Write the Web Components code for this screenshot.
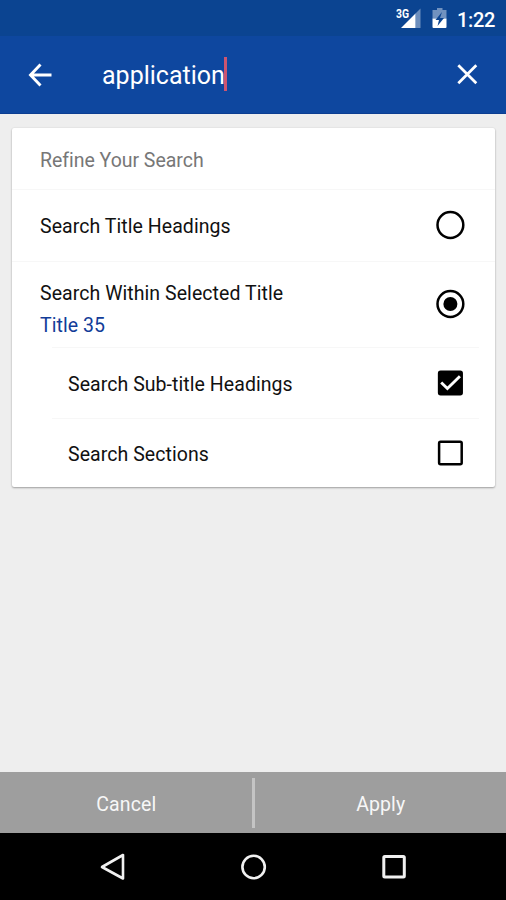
<!DOCTYPE html>
<html lang="en">
<head>
<meta charset="utf-8">
<title>Search</title>
<style>
html,body{margin:0;height:100%}
body{font-family:Roboto,"Liberation Sans",sans-serif;background:#eee;overflow:hidden}
</style>
</head>
<body>
<search-screen></search-screen>
<script>
const define = (name, html) => customElements.define(name, class extends HTMLElement {
  constructor() {
    super();
    this.attachShadow({mode: 'open'}).innerHTML = '<style>:host{box-sizing:border-box}svg{display:block;flex:none}</style>' + html;
  }
});

define('status-bar', `
<style>
:host{display:flex;height:36px;background:#0b4491;color:#fff;align-items:center;justify-content:flex-end;padding-right:11px}
.time{font-size:20px;line-height:24px;font-weight:500;width:38px;margin-left:10px;padding-top:3px;white-space:nowrap;letter-spacing:-.3px}
</style>
<svg width="26" height="36" viewBox="0 0 26 36"><path d="M6 28 20.500 13.500V28Z" fill="#fff"/><path d="M20.500 13.500 25.500 8.500V28H20.500Z" fill="#fff" opacity=".4"/><text x="1" y="17.500" font-size="12" font-weight="700" fill="#fff" textLength="13" lengthAdjust="spacingAndGlyphs">3G</text></svg>
<svg width="15" height="36" viewBox="0 0 15 36" style="margin-left:11px"><path d="M1 10H5V8H10.500V10H14.500V18.500H.5V10Z" fill="#fff" opacity=".42"/><path d="M.5 18.500H14.500V27Q14.500 28 13.500 28H1.500Q.5 28 .5 27Z" fill="#fff"/><path d="M10 12 3.500 20H7L5.500 26 12 18H8Z" fill="#0b4491"/></svg>
<span class="time">1:22</span>`);

define('search-bar', `
<style>
:host{display:flex;height:78px;background:#0e479f;color:#fff;align-items:center;padding:0 27px 0 28px;border-bottom:1px solid #0b3d91}
.q{margin-left:50px;width:122px;font-size:25px;line-height:34px;white-space:nowrap;padding-top:2px}
.cursor{width:3px;height:34px;background:#cc5570;margin-top:-2px}
.close{margin-left:auto}
</style>
<svg width="24" height="24" viewBox="0 0 24 24" fill="none" stroke="#fff" stroke-width="2.900"><path d="M23.500 12H3M12.500 1.500 2.500 12 12.500 22.500"/></svg>
<span class="q">application</span><span class="cursor"></span>
<svg class="close" width="24" height="24" viewBox="0 0 24 24" fill="none" stroke="#fff" stroke-width="2.700"><path d="M3.300 2.300 21.300 20.300M21.300 2.300 3.300 20.300"/></svg>`);

define('refine-card', `
<style>
:host{display:block;margin:14px 11px 0 12px;height:359px;background:#fff;border-radius:2px;box-shadow:0 1px 2px rgba(0,0,0,.32),0 0 2px rgba(0,0,0,.08)}
h2{margin:0;height:61px;box-sizing:border-box;padding:2px 0 0 28px;font-size:19.500px;line-height:61px;font-weight:400;color:#777;letter-spacing:-.03px}
</style><h2><slot name="title"></slot></h2><slot></slot>`);

define('option-row', `
<style>
:host{display:flex;height:var(--h,70px);align-items:center;padding:0 30px 0 28px;color:#111;font-size:19.500px;line-height:24px;letter-spacing:.06px;background:linear-gradient(#f7f7f7,#f7f7f7) 0 0/100% 1px no-repeat}
:host([sub]){padding-left:56px;background-position:40px 0;background-size:427px 1px}
.label{flex:1;white-space:nowrap;padding-top:var(--drop,3px)}
::slotted([slot=value]){display:block;color:#123c98;margin-top:8px}
::slotted([slot=control]){margin-top:var(--mark,0px)}
</style><div class="label"><slot></slot><slot name="value"></slot></div><slot name="control"></slot>`);

customElements.define('choice-mark', class extends HTMLElement {
  connectedCallback() {
    const on = this.hasAttribute('checked');
    const art = this.getAttribute('type') === 'radio'
      ? `<circle cx="15" cy="15" r="12.900" fill="none" stroke="#000" stroke-width="2.500"/>${on ? '<circle cx="15" cy="15" r="7" fill="#000"/>' : ''}`
      : `<rect x="3.700" y="3.700" width="22.600" height="22.600" rx="1.500" fill="${on ? '#000' : 'none'}" stroke="#000" stroke-width="2.500"/>${on ? '<path d="M5.800 14.500 12 20.500 24.500 8.300" fill="none" stroke="#fff" stroke-width="2.900"/>' : ''}`;
    this.attachShadow({mode: 'open'}).innerHTML = `<style>:host{display:block;width:30px;height:30px}svg{display:block}</style><svg width="30" height="30" viewBox="-.4 0 30 30">${art}</svg>`;
  }
});

define('action-bar', `
<style>
:host{display:flex;height:61px;margin-top:auto;background:#9e9e9e;color:#f7f7f7;align-items:center;font-size:19.500px;letter-spacing:.1px}
.a{flex:1;text-align:center;padding:4px 0 0 1px}
i{width:3px;height:50px;background:#c4c4c4}
</style><span class="a"><slot name="cancel"></slot></span><i></i><span class="a"><slot name="apply"></slot></span>`);

define('nav-bar', `
<style>:host{display:grid;grid-template-columns:repeat(3,28px);column-gap:112.500px;justify-content:center;align-items:center;height:67px;background:#000;padding-left:1px}</style>
<svg width="28" height="28" viewBox="0 0 28 28" fill="none" stroke="#f1f1f1" stroke-width="2.600"><path d="M24 2V25.500L3 14Z" stroke-linejoin="round"/></svg>
<svg width="28" height="28" viewBox="0 0 28 28" fill="none" stroke="#f1f1f1" stroke-width="2.600"><circle cx="13.600" cy="14" r="11.200"/></svg>
<svg width="28" height="28" viewBox="0 0 28 28" fill="none" stroke="#f1f1f1" stroke-width="3"><rect x="3.800" y="3.500" width="20.500" height="20.500" rx="1"/></svg>`);

define('search-screen', `
<style>:host{display:flex;flex-direction:column;width:506px;height:900px;background:#eee}</style>
<status-bar></status-bar>
<search-bar></search-bar>
<refine-card>
  <span slot="title">Refine Your Search</span>
  <option-row style="--h:72px;--drop:4px">Search Title Headings<choice-mark slot="control" type="radio"></choice-mark></option-row>
  <option-row style="--h:86px;--drop:12px">Search Within Selected Title<span slot="value">Title 35</span><choice-mark slot="control" type="radio" checked></choice-mark></option-row>
  <option-row sub style="--h:71px;--drop:4px">Search Sub-title Headings<choice-mark slot="control" type="checkbox" checked></choice-mark></option-row>
  <option-row sub style="--h:69px;--drop:4px;--mark:1px">Search Sections<choice-mark slot="control" type="checkbox"></choice-mark></option-row>
</refine-card>
<action-bar><span slot="cancel">Cancel</span><span slot="apply">Apply</span></action-bar>
<nav-bar></nav-bar>`);
</script>
</body>
</html>
